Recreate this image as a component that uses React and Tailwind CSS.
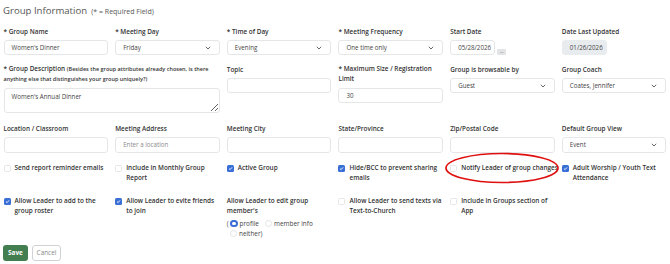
import React from "react";

const F = { fontFamily: '"Open Sans", "Noto Sans", Arial, sans-serif' };

function Label({ children, req, className = "" }) {
  return (
    <div className={"text-[6.4px] leading-[10px] font-semibold text-[#333] mb-[3px] " + className}>
      {req && "* "}
      {children}
    </div>
  );
}

function Input({ value, placeholder, gray, className = "" }) {
  return (
    <div
      className={
        "h-[15px] rounded-[3px] border border-[#e4e6e8] flex items-center px-[7px] text-[6.2px] " +
        (gray ? "bg-[#e9ecef] text-[#444] " : "bg-white text-[#444] ") +
        className
      }
    >
      {value ? <span>{value}</span> : <span className="text-[#8a8a8a]">{placeholder}</span>}
    </div>
  );
}

function Chevron() {
  return (
    <svg width="6" height="4" viewBox="0 0 6 4" className="shrink-0">
      <polyline points="0.8,0.8 3,3 5.2,0.8" fill="none" stroke="#555" strokeWidth="0.9" />
    </svg>
  );
}

function Select({ value, className = "" }) {
  return (
    <div className={"h-[15px] rounded-[3px] border border-[#e4e6e8] bg-white flex items-center justify-between pl-[7px] pr-[8px] text-[6.2px] text-[#444] " + className}>
      <span>{value}</span>
      <Chevron />
    </div>
  );
}

function Check({ checked, children, nowrap }) {
  return (
    <div className="flex items-start gap-[4px] text-[6.4px] leading-[10px] font-semibold text-[#333]">
      <div className="h-[10px] flex items-center shrink-0">
        {checked ? (
          <div className="w-[7px] h-[7px] rounded-[1.5px] bg-[#3a6fd6] flex items-center justify-center">
            <svg width="5" height="5" viewBox="0 0 5 5">
              <polyline points="1,2.6 2.1,3.6 4,1.4" fill="none" stroke="white" strokeWidth="0.9" />
            </svg>
          </div>
        ) : (
          <div className="w-[7px] h-[7px] rounded-[1.5px] border border-[#e6e6e6] bg-white" />
        )}
      </div>
      <span className={nowrap ? "whitespace-nowrap" : ""}>{children}</span>
    </div>
  );
}

function Radio({ checked }) {
  return checked ? (
    <span className="inline-block w-[7.5px] h-[7.5px] rounded-full border-[2px] border-[#3a6fd6] bg-white align-[-1px]" />
  ) : (
    <span className="inline-block w-[7.5px] h-[7.5px] rounded-full border border-[#e3e3e3] bg-white align-[-1px]" />
  );
}

const Cell = ({ children, className = "" }) => (
  <div className={"px-[3.5px] " + className}>{children}</div>
);

export default function App() {
  return (
    <div className="relative w-[670px] h-[264px] bg-white overflow-hidden" style={F}>
      <div className="h-[16px] leading-[16px] pl-[3px] text-[#555]">
        <span className="text-[9.6px]">Group Information</span>{" "}
        <span className="text-[7px]">(* = Required Field)</span>
      </div>

      {/* Row 1 */}
      <div className="grid grid-cols-6 mt-[11px]">
        <Cell>
          <Label req>Group Name</Label>
          <Input value="Women's Dinner" />
        </Cell>
        <Cell>
          <Label req>Meeting Day</Label>
          <Select value="Friday" />
        </Cell>
        <Cell>
          <Label req>Time of Day</Label>
          <Select value="Evening" />
        </Cell>
        <Cell>
          <Label req>Meeting Frequency</Label>
          <Select value="One time only" />
        </Cell>
        <Cell>
          <Label>Start Date</Label>
          <div className="flex items-end gap-[2px]">
            <Input value="05/28/2026" className="w-[45px] px-[6px]" />
            <div className="w-[9px] h-[6px] rounded-[1px] bg-[#e2e4e6] text-[5px] leading-[4px] text-center text-[#555]">...</div>
          </div>
        </Cell>
        <Cell>
          <Label>Date Last Updated</Label>
          <Input value="01/26/2026" gray className="w-[45px] px-[6px] border-[#e9ecef]" />
        </Cell>
      </div>

      {/* Row 2 */}
      <div className="grid grid-cols-6 mt-[9px]">
        <Cell className="col-span-2">
          <div className="text-[6.4px] leading-[10px] font-semibold text-[#333] mb-[4px] whitespace-nowrap">
            <div>
              * Group Description <span className="text-[5.5px]">(Besides the group attributes already chosen, is there</span>
            </div>
            <div className="text-[5.5px]">anything else that distinguishes your group uniquely?)</div>
          </div>
          <textarea
            readOnly
            defaultValue="Women's Annual Dinner"
            className="block w-full h-[25px] rounded-[3px] border border-[#e4e6e8] px-[7px] pt-[3px] text-[6.2px] leading-[10px] text-[#444] outline-none"
          />
        </Cell>
        <Cell>
          <Label className="mt-[1px]">Topic</Label>
          <Input value="" />
        </Cell>
        <Cell>
          <div className="text-[6.4px] leading-[10px] font-semibold text-[#333] mb-[4px]">
            <div>* Maximum Size / Registration</div>
            <div>Limit</div>
          </div>
          <Input value="30" />
        </Cell>
        <Cell>
          <Label className="mt-[1px]">Group is browsable by</Label>
          <Select value="Guest" />
        </Cell>
        <Cell>
          <Label className="mt-[1px]">Group Coach</Label>
          <Select value="Coates, Jennifer" />
        </Cell>
      </div>

      {/* Row 3 */}
      <div className="grid grid-cols-6 mt-[11px]">
        <Cell>
          <Label>Location / Classroom</Label>
          <Input value="" className="h-[16px]" />
        </Cell>
        <Cell>
          <Label>Meeting Address</Label>
          <Input placeholder="Enter a location" className="h-[16px]" />
        </Cell>
        <Cell>
          <Label>Meeting City</Label>
          <Input value="" className="h-[16px]" />
        </Cell>
        <Cell>
          <Label>State/Province</Label>
          <Input value="" className="h-[16px]" />
        </Cell>
        <Cell>
          <Label>Zip/Postal Code</Label>
          <Input value="" className="h-[16px]" />
        </Cell>
        <Cell>
          <Label>Default Group View</Label>
          <Select value="Event" className="h-[16px]" />
        </Cell>
      </div>

      {/* Row 4 */}
      <div className="grid grid-cols-6 mt-[10px]">
        <Cell><Check>Send report reminder emails</Check></Cell>
        <Cell><Check>Include in Monthly Group Report</Check></Cell>
        <Cell><Check checked>Active Group</Check></Cell>
        <Cell><Check checked>Hide/BCC to prevent sharing emails</Check></Cell>
        <Cell><Check nowrap>Notify Leader of group changes</Check></Cell>
        <Cell><Check checked>Adult Worship / Youth Text Attendance</Check></Cell>
      </div>

      {/* Row 5 */}
      <div className="grid grid-cols-6 mt-[13px]">
        <Cell><Check checked>Allow Leader to add to the group roster</Check></Cell>
        <Cell><Check checked>Allow Leader to evite friends to join</Check></Cell>
        <Cell>
          <div className="text-[6.4px] leading-[10px] font-semibold text-[#333]">Allow Leader to edit group member's</div>
          <div className="mt-[3px] text-[6.4px] leading-[10px] text-[#444]">
            <div>
              <span>( </span>
              <Radio checked /> <span>profile</span>
              <span className="ml-[6px]"><Radio /></span> <span>member info</span>
            </div>
            <div className="pl-[3px]">
              <Radio /> <span>neither)</span>
            </div>
          </div>
        </Cell>
        <Cell><Check>Allow Leader to send texts via Text-to-Church</Check></Cell>
        <Cell><Check>Include in Groups section of App</Check></Cell>
        <Cell />
      </div>

      {/* Buttons */}
      <div className="flex gap-[4px] pl-[3px] mt-[6px]">
        <div className="w-[25px] h-[16px] rounded-[3px] bg-[#427e50] text-white text-[6.4px] font-bold flex items-center justify-center">Save</div>
        <div className="w-[29px] h-[16px] rounded-[3px] border border-[#cfd3d6] text-[#888] text-[6.4px] flex items-center justify-center bg-white">Cancel</div>
      </div>

      {/* Annotation ellipse */}
      <svg className="absolute left-0 top-0 pointer-events-none" width="670" height="264">
        <ellipse cx="502" cy="168" rx="56" ry="14.5" fill="none" stroke="#e01010" strokeWidth="1.7" />
      </svg>
    </div>
  );
}
